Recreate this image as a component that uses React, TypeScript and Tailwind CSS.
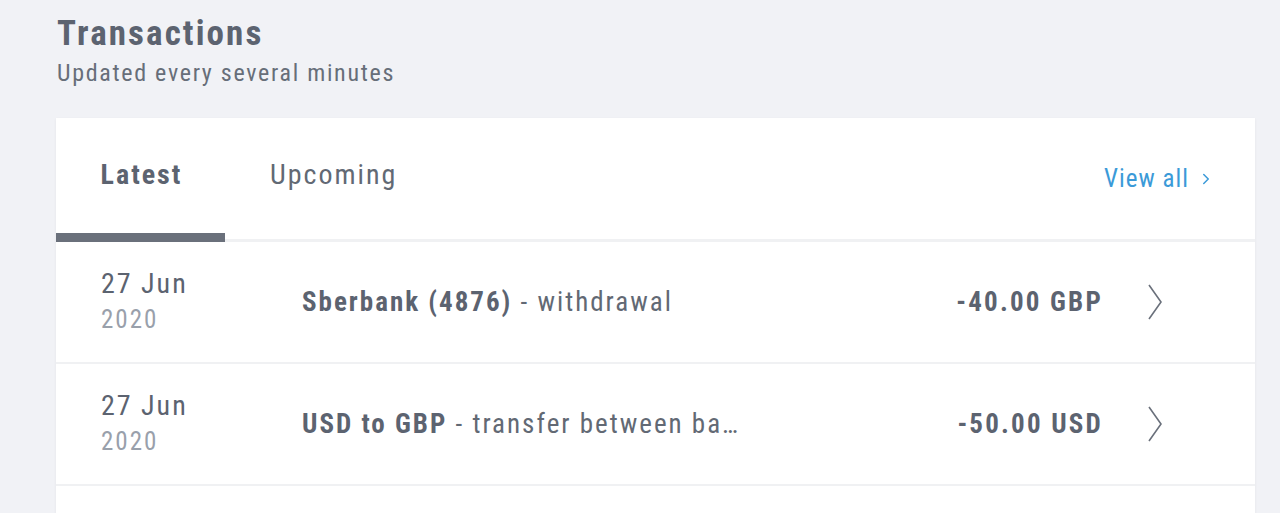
import { ChevronRight } from 'lucide-react';

const rows = [
  { day: '27 Jun', year: '2020', title: 'Sberbank (4876)', note: 'withdrawal', amount: '-40.00 GBP' },
  { day: '27 Jun', year: '2020', title: 'USD to GBP', note: 'transfer between banks', amount: '-50.00 USD' },
];

export default function App() {
  return (
    <div
      className="w-[1280px] h-[513px] overflow-hidden bg-[#f1f2f6] text-[#5c6370] tracking-[2px]"
      style={{ fontFamily: 'Roboto, "Noto Sans", sans-serif', fontStretch: '75%' }}
    >
      {/* Header */}
      <div className="pl-[57px] pt-[12px]">
        <h1 className="text-[35px] leading-[44px] font-bold tracking-[2.1px]">Transactions</h1>
        <p className="mt-[2px] text-[24px] leading-[30px] text-[#676e79] tracking-[1.7px]">
          Updated every several minutes
        </p>
      </div>

      {/* Card */}
      <div className="ml-[56px] mt-[30px] w-[1199px] bg-white shadow-[0_1px_3px_rgba(0,0,0,0.06)]">
        {/* Tabs */}
        <div className="relative flex items-center h-[124px] border-b-[3px] border-[#f0f1f3]">
          <div className="w-[169px] h-full flex items-center justify-center pb-[7px] pl-[2px] text-[28px] font-bold">
            Latest
          </div>
          <div className="ml-[45px] pb-[7px] text-[28px] text-[#626974]">Upcoming</div>
          <div className="ml-auto mr-[40px] flex items-center gap-[8px] text-[25px] text-[#3b9ad8] tracking-[1px]">
            View all
            <ChevronRight className="w-[18px] h-[18px]" strokeWidth={2} />
          </div>
          <div className="absolute left-0 bottom-[-3px] w-[169px] h-[9px] bg-[#6a707b]" />
        </div>

        {/* Rows */}
        {rows.map((r, i) => (
          <div key={i} className="flex items-center h-[122px] border-b-[2px] border-[#f0f1f3]">
            <div className="w-[246px] pl-[45px]">
              <div className="text-[28px] leading-[36px]">{r.day}</div>
              <div className="text-[25px] leading-[36px] text-[#99a0ab]">{r.year}</div>
            </div>
            <div className="w-[450px] truncate text-[27px] text-[#626974]">
              <span className="font-bold text-[#5c6370]">{r.title}</span> - {r.note}
            </div>
            <div className="ml-auto text-[27px] font-bold tracking-[2.2px]">{r.amount}</div>
            <svg className="ml-[44px] mr-[92px]" width="16" height="38" viewBox="0 0 16 38" fill="none">
              <path d="M2 2 L14 19 L2 36" stroke="#6a707b" strokeWidth="1.6" />
            </svg>
          </div>
        ))}
        <div className="h-[40px]" />
      </div>
    </div>
  );
}
